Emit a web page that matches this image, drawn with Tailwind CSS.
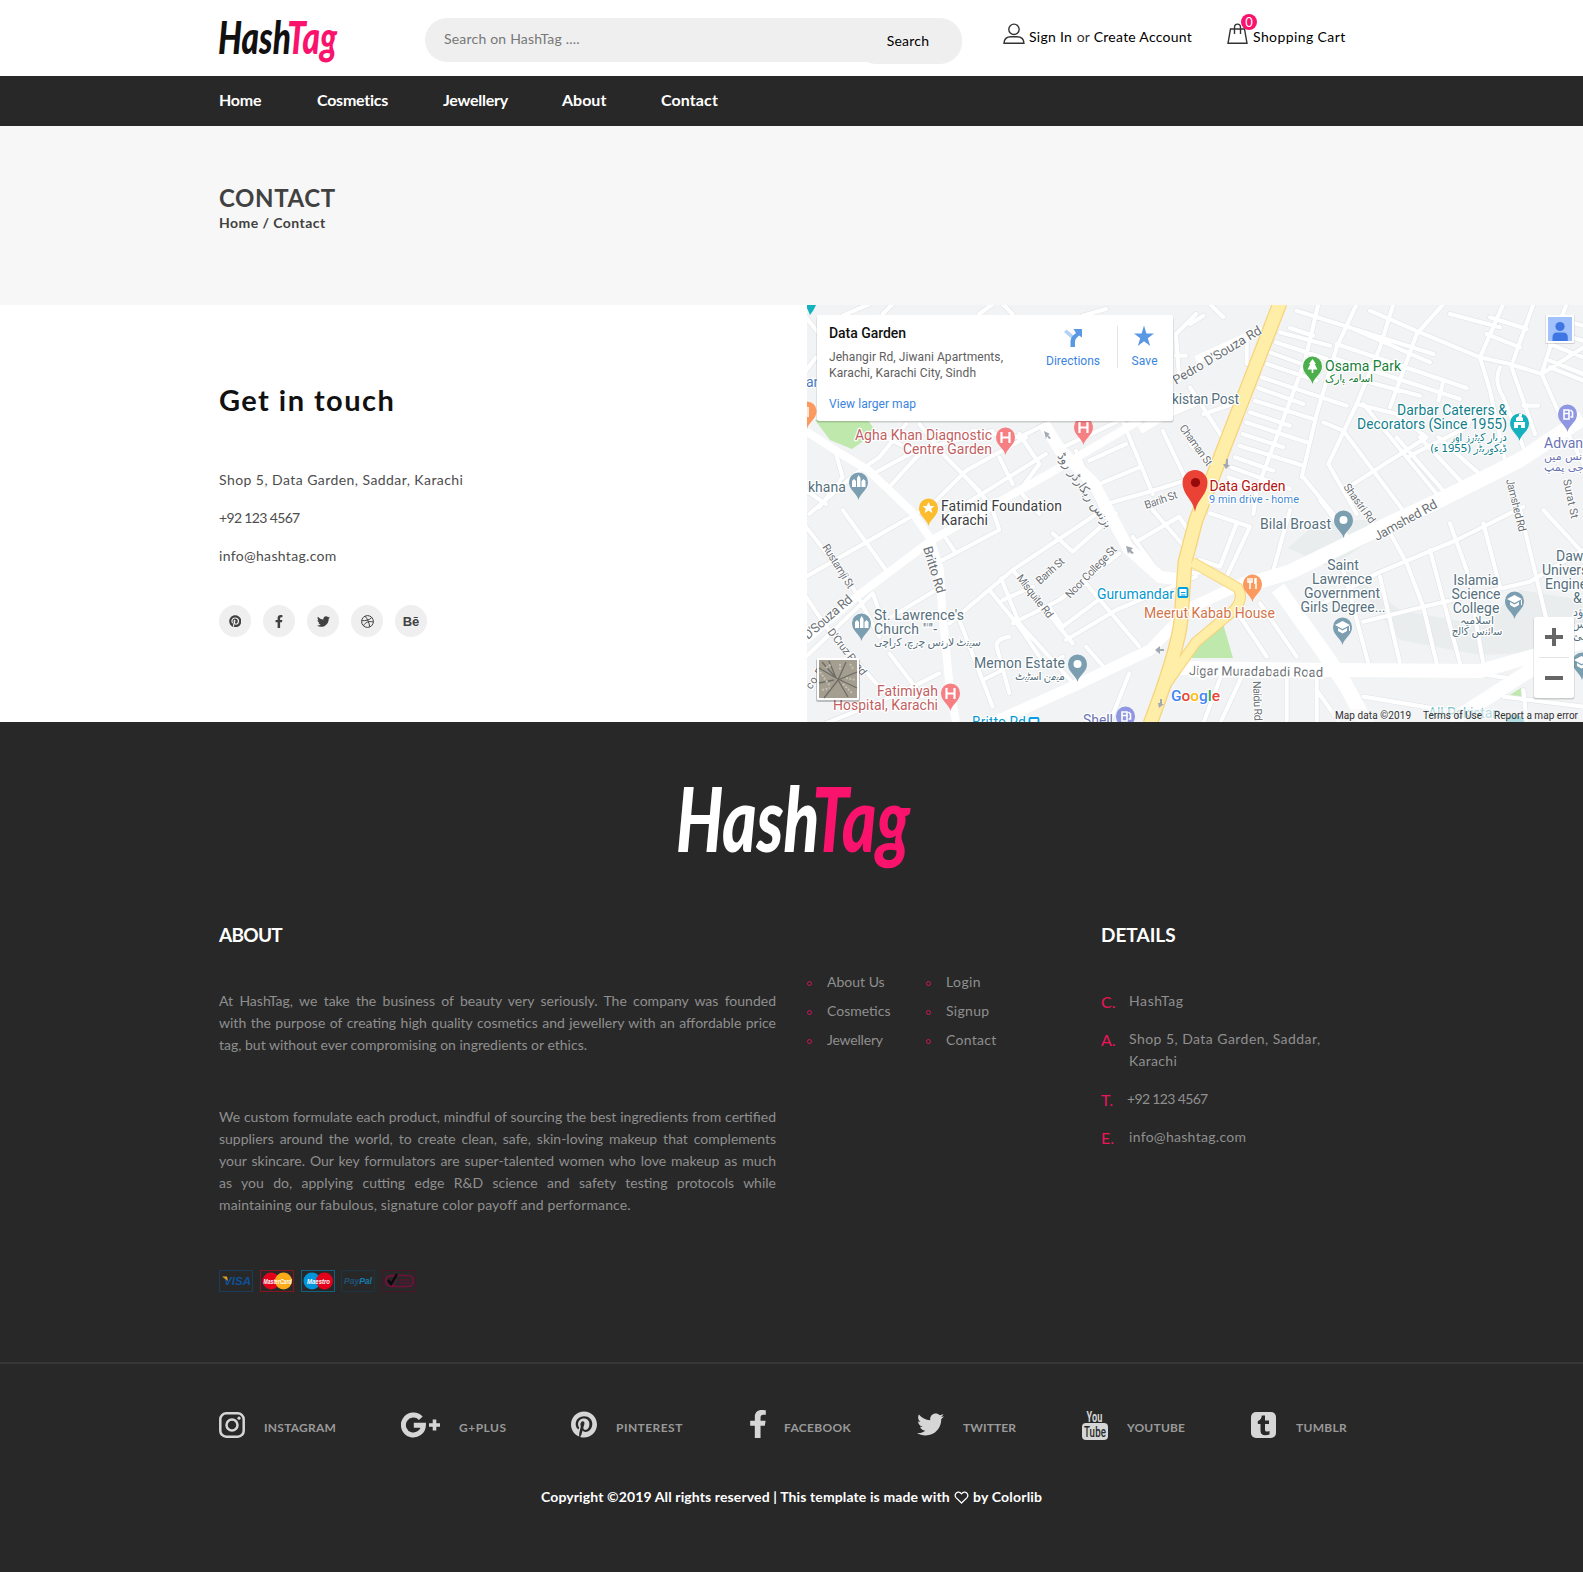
<!DOCTYPE html>
<html lang="en">
<head>
<meta charset="utf-8">
<title>HashTag | Contact</title>
<script src="https://cdn.jsdelivr.net/npm/@tailwindcss/browser@4"></script>
</head>
<body class="bg-white font-['Lato',sans-serif] text-[14px] leading-[22px] text-black w-[1583px] overflow-x-hidden">

<header>
  <div class="flex items-start h-[76px] pl-[217px]">
    <svg class="w-[122px] h-[46px] mt-[20px] shrink-0 overflow-visible" viewBox="0 0 122 46" font-family="Lato" font-weight="900" font-style="italic" font-size="45">
      <text x="1" y="34" textLength="119" lengthAdjust="spacingAndGlyphs" fill="#111">Hash<tspan fill="#f9136c">Tag</tspan></text>
    </svg>
    <div class="flex items-start justify-between w-[537px] h-[44px] mt-[18px] ml-[86px] pl-[19px] rounded-full bg-[#efefef] shrink-0">
      <span class="mt-[10px] text-[#777] tracking-[0.2px]">Search on HashTag ....</span>
      <button class="mt-[2px] pb-[2px] w-[108px] h-[44px] rounded-full bg-[#efefef] tracking-[0.25px]">Search</button>
    </div>
    <a class="flex items-start ml-[41px] w-[189px] shrink-0 whitespace-nowrap">
      <svg class="w-[22px] h-[22px] mt-[23px]" viewBox="0 0 22 22" fill="none" stroke="#333" stroke-width="1.4"><circle cx="11" cy="6.3" r="5.2"/><path d="M1 20.3C1.2 15.5 4.500 13.800 8 13.800H14C17.500 13.800 20.800 15.500 21 20.300Z"/></svg>
      <span class="mt-[26px] ml-[4px] w-[48px] tracking-[0.3px]">Sign In</span><span class="mt-[26px] w-[17px] text-[#333]">or</span><span class="mt-[26px] tracking-[0.25px]">Create Account</span>
    </a>
    <a class="flex items-start ml-[35px] relative whitespace-nowrap">
      <svg class="w-[21px] h-[22px] mt-[23px]" viewBox="0 0 21 22" fill="none" stroke="#333" stroke-width="1.4"><path d="M3.500 6H17.500L20 20.300H1Z M7.500 11V4.500C7.500 0 13.500 0 13.500 4.500V11"/></svg>
      <span class="absolute left-[14px] top-[14px] size-[16px] rounded-full bg-[#f9136c] text-white text-[13px] leading-[16px] text-center">0</span>
      <span class="mt-[26px] ml-[5px] tracking-[0.4px]">Shopping Cart</span>
    </a>
  </div>
  <nav class="flex items-center h-[50px] bg-[#282828] pl-[219px] pb-[2px] text-white text-[16px] font-bold whitespace-nowrap tracking-[-0.25px]">
    <a class="w-[98px]">Home</a><a class="w-[126px]">Cosmetics</a><a class="w-[119px]">Jewellery</a><a class="w-[99px] tracking-normal">About</a><a class="tracking-[0.1px]">Contact</a>
  </nav>
</header>

<section class="h-[179px] bg-[#f7f7f7] pl-[219px] pt-[60px] text-[#414141] font-bold">
  <h1 class="text-[24px] leading-[24px] tracking-[0.6px]">CONTACT</h1>
  <p class="mt-[1px] tracking-[0.45px] pt-[1px]">Home / Contact</p>
</section>

<main class="flex h-[417px]">
  <div class="w-[807px] pl-[219px] pt-[75px] shrink-0">
    <h2 class="text-[29px] leading-[40px] font-bold text-[#111] tracking-[1.45px]">Get in touch</h2>
    <div class="mt-[49px] flex flex-col gap-[16px] text-[#4d4d4d]">
      <p class="tracking-[0.44px]">Shop 5, Data Garden, Saddar, Karachi</p>
      <p class="tracking-[-0.65px]">+92 123 4567</p>
      <p class="tracking-[0.32px]">info@hashtag.com</p>
    </div>
    <div class="flex gap-[12px] mt-[38px] text-[#414141]">
      <a class="size-[32px] rounded-full bg-[#efefef] flex items-center justify-center"><svg class="size-[12.500px]" viewBox="0 0 496 512" fill="currentColor"><path id="pin" d="M496 256c0 137-111 248-248 248-25.6 0-50.2-3.9-73.4-11.1 10.1-16.5 25.2-43.5 30.8-65 3-11.600 15.4-59 15.4-59 8.1 15.4 31.7 28.5 56.8 28.5 74.800 0 128.700-68.800 128.700-154.300 0-81.900-66.900-143.200-152.900-143.200-107 0-163.900 71.800-163.900 150.100 0 36.400 19.400 81.700 50.300 96.100 4.700 2.200 7.200 1.200 8.300-3.300.8-3.400 5-20.300 6.900-28.100.6-2.500.3-4.700-1.700-7.100-10.100-12.500-18.300-35.300-18.300-56.600 0-54.700 41.400-107.600 112-107.600 60.900 0 103.600 41.500 103.600 100.900 0 67.100-33.900 113.600-78 113.600-24.300 0-42.600-20.100-36.700-44.800 7-29.500 20.500-61.300 20.500-82.600 0-19-10.200-34.900-31.400-34.900-24.900 0-44.900 25.700-44.900 60.200 0 22 7.400 36.800 7.400 36.800s-24.500 103.800-29 123.200c-5 21.400-3 51.600-.9 71.200C65.400 450.900 0 361.100 0 256 0 119 111 8 248 8s248 111 248 248z"/></svg></a>
      <a class="size-[32px] rounded-full bg-[#efefef] flex items-center justify-center"><svg class="h-[13px] w-[8px]" viewBox="0 0 320 512" fill="currentColor"><path id="fb" d="M279.140 288l14.220-92.660h-88.910v-60.130c0-25.350 12.420-50.060 52.240-50.060h40.420V6.260S260.430 0 225.360 0c-73.220 0-121.080 44.380-121.080 124.720v70.620H22.890V288h81.390v224h100.170V288z"/></svg></a>
      <a class="size-[32px] rounded-full bg-[#efefef] flex items-center justify-center"><svg class="size-[13px]" viewBox="0 0 512 512" fill="currentColor"><path id="tw" d="M459.370 151.716c.325 4.548.325 9.097.325 13.645 0 138.720-105.583 298.558-298.558 298.558-59.452 0-114.680-17.219-161.137-47.106 8.447.974 16.568 1.299 25.340 1.299 49.055 0 94.213-16.568 130.274-44.832-46.132-.975-84.792-31.188-98.112-72.772 6.498.974 12.995 1.624 19.818 1.624 9.421 0 18.843-1.300 27.614-3.573-48.081-9.747-84.143-51.980-84.143-102.985v-1.299c13.969 7.797 30.214 12.670 47.431 13.319-28.264-18.843-46.781-51.005-46.781-87.391 0-19.492 5.197-37.360 14.294-52.954 51.655 63.675 129.300 105.258 216.365 109.807-1.624-7.797-2.599-15.918-2.599-24.040 0-57.828 46.782-104.934 104.934-104.934 30.213 0 57.502 12.670 76.670 33.137 23.715-4.548 46.456-13.320 66.599-25.340-7.798 24.366-24.366 44.833-46.132 57.827 21.117-2.273 41.584-8.122 60.426-16.243-14.292 20.791-32.161 39.308-52.628 54.253z"/></svg></a>
      <a class="size-[32px] rounded-full bg-[#efefef] flex items-center justify-center"><svg class="size-[13px]" viewBox="0 0 26 26" fill="none" stroke="currentColor" stroke-width="2"><circle cx="13" cy="13" r="11.800"/><path d="M8.500 2.500C13 8 16 15 17.500 23.500M1.500 11.500C9 11.500 17 10.500 21.500 5M5 21.500C8.500 14.500 16 11.500 24.700 14"/></svg></a>
      <a class="size-[32px] rounded-full bg-[#efefef] flex items-center justify-center font-['Liberation_Sans'] font-bold text-[13px] leading-none">Bē</a>
    </div>
  </div>

  <svg class="w-[776px] h-[417px] shrink-0" viewBox="807 305 776 417" font-family="Roboto">
    <defs>
      <g id="streets" fill="none" stroke-linejoin="round">
        <!-- north-west -->
        <g transform="translate(806 304) scale(.33333)">
          <path d="M0 40L40 90M0 200L30 160M110 35L190 0M230 30L260 0M520 30L560 0M590 0L620 30M830 35L900 15M1170 30L1110 90L1120 230M1110 155H1140M1100 330L1170 300M1070 380L1170 590M950 350L1040 570M810 440L890 620M640 390L700 480M580 460L620 540M480 520L560 610M500 380L640 400L720 360M300 360L220 460L160 500L10 630M200 510L330 440L560 380M350 630L480 500L660 400M430 630L720 450M240 560L340 450M90 450L110 520L40 610M0 560L60 600M850 470L960 420M880 540L1000 490M900 600L1040 560L1170 520M770 430L940 350M640 560L700 630M340 360L420 460L520 560M240 400L340 450M700 480L640 560"/>
        </g>
        <!-- north-east -->
        <g transform="translate(1190 304) scale(.33333)">
          <path d="M385 0L345 170L200 560L190 630M500 0L440 130L380 330L335 520M610 0L570 130L500 300L415 480M760 0L680 90L600 310M940 0L870 160M1030 0L970 170M270 85L420 125M258 115L410 165M240 145L390 200M232 180L380 230M215 220L470 305M205 252L340 300M195 290L370 345M180 325L300 365M168 355L350 415M158 390L280 430M148 425L340 485M135 460L250 500M125 490L300 555M115 520L230 560M300 72L370 95M320 20L730 150M480 70L720 175M440 120L830 252M440 165L810 285M520 230L690 275M540 20L690 85L870 160L960 180L1055 210L1180 130M400 355L460 380M460 380L640 620M520 300L740 570M340 520L430 630M415 480L500 630M500 300L620 330L710 400L490 540M650 460L830 370L850 320M620 400L760 560M690 400L820 540M745 400L880 520M930 190Q910 230 940 280L1000 430M965 190L1035 390M1000 305H1045M1055 210L1130 380L1180 480M1055 210L1080 130L1130 0M1090 40L1180 65M1080 80L1180 110M1080 120L1180 160M1080 170L1180 210M1080 190L1180 230M760 230L745 290M870 160L900 260L945 470M900 40L1010 75M780 30L930 70M890 90L990 130M0 60L40 35M60 0L100 40M170 110V180M40 330L130 300M0 250L110 420M0 420L80 500"/>
        </g>
        <!-- south-west -->
        <g transform="translate(806 510) scale(.33333)">
          <path d="M0 200L350 0M0 50L140 230L220 380M110 0L240 180M0 260L60 350L210 520M0 440L200 250L215 290M240 330L390 240M390 160L580 60L560 0M410 70L450 130M430 340L620 180L890 0M620 180L800 400M585 205L640 340L810 530M550 240L640 350L720 470M590 270L680 230M620 340L760 270L940 130M460 330L560 590M610 380Q560 390 575 420L610 550M530 510L590 480M430 20L500 0M740 70L800 125L930 10M730 290L770 350L890 260M840 220L1000 410M780 390L930 300L1170 200M250 430L350 560M400 490L280 550L60 640M720 470L770 440M840 410L910 490M970 490L910 640M1000 90L1120 20L1170 100M1040 0L1170 150M980 80L1060 190"/>
        </g>
        <!-- south-east -->
        <g transform="translate(1190 510) scale(.33333)">
          <path d="M60 10L180 50L110 200M140 40L90 170L30 150M300 0L250 180M0 190L60 185M400 280L560 190L800 90L1000 -10M520 335L700 290L1020 215L1180 120M590 50L650 160L700 290L740 460M780 40L830 180L880 460M720 120L810 460M570 200L630 460M460 180L535 460M880 40L930 230M990 0L1070 330M150 320L230 440M210 280L320 440M160 490L90 640M290 500V640M380 500V640M380 540L450 640M520 560L820 610M100 480L40 640M860 490L960 505M1000 540L1010 640M1060 0L1180 130M390 -30L480 90M940 560L1180 590"/>
        </g>
      </g>
      <g id="avenues" fill="none" stroke-linejoin="round">
        <path stroke-width="8" d="M806 431L838 452L868 470L912 512L930 538L940 570L942 610L950 690L956 722M806 640L856 597L932 540L1052 472L1140 420M1190 400L1140 430M1196 360L1262 330"/>
        <path stroke-width="12" d="M1044 424L1060 450L1094 484L1128 548L1160 577L1184 580"/>
        <path stroke-width="11" d="M990 724L1072 687L1150 650L1190 608L1250 580"/>
        <path stroke-width="15" d="M1250 584L1290 572L1380 528L1440 500L1520 460L1583 418"/>
        <path stroke-width="15" d="M1278 588L1322 650L1345 684L1370 730"/>
        <path stroke-width="14" d="M1178 668L1340 670L1480 671L1583 642M1450 722L1540 664L1583 630"/>
      </g>
    </defs>
    <rect x="807" y="305" width="776" height="417" fill="#f1f3f4"/>
    <path d="M1288 548L1320 520L1400 520L1330 568ZM1345 570L1400 640L1480 655L1583 650V600L1520 590L1480 625L1400 610Z" fill="#e9edee"/>
    <path d="M815 420H868L876 432L852 449L830 440Z M1185 652L1222 620L1233 658H1185Z M1505 698L1521 688V700Z" fill="#bfe8ac"/>
    <g stroke="#e1e4e7" stroke-width="16" stroke-linecap="round"><use href="#streets"/></g>
    <g stroke="#fff" stroke-width="12.500" stroke-linecap="round"><use href="#streets"/></g>
    <g stroke="#fff"><use href="#avenues"/></g>
    <g fill="none" stroke-linejoin="round">
      <g stroke="#f7d37a" stroke-width="15"><path d="M1280 303L1210 484L1196 520L1185 562L1181 620Q1178 650 1150 724"/><path stroke-width="11" d="M1192 562L1238 588Q1245 600 1232 612L1196 642L1162 690L1150 724"/></g>
      <g stroke="#ffeea8" stroke-width="12.500"><path d="M1280 303L1210 484L1196 520L1185 562L1181 620Q1178 650 1150 724"/><path stroke-width="9" d="M1192 562L1238 588Q1245 600 1232 612L1196 642L1162 690L1150 724"/></g>
    </g>

    <!-- street names -->
    <g fill="#6b7075" font-size="11" stroke="#fff" stroke-width="2" paint-order="stroke" stroke-linejoin="round">
      <text transform="translate(1176 385) rotate(-31)" font-size="13" textLength="101">Pedro D'Souza Rd</text>
      <text transform="translate(1179 428) rotate(54)" textLength="48">Chaman St</text>
      <text transform="translate(1146 509) rotate(-19)" textLength="34">Barih St</text>
      <text transform="translate(1057 456) rotate(56)" font-size="12.500" font-family="DejaVu Sans" textLength="88">بزنس ریکارڈر روڈ</text>
      <text transform="translate(923 548) rotate(73)" font-size="13" textLength="48">Britto Rd</text>
      <text transform="translate(822 547) rotate(58)" textLength="50">Rustamji St</text>
      <text transform="translate(808 640) rotate(-41)" font-size="13" textLength="60">D'Souza Rd</text>
      <text transform="translate(827 632) rotate(52)" textLength="56">D'Cruz Road</text>
      <text transform="translate(1040 585) rotate(-42)" textLength="34">Barih St</text>
      <text transform="translate(1070 599) rotate(-46)" textLength="68">Noor College St</text>
      <text transform="translate(1016 578) rotate(52)" textLength="52">Misquite Rd</text>
      <text transform="translate(1343 487) rotate(54)" textLength="46">Shastri Rd</text>
      <text transform="translate(1377 541) rotate(-29)" font-size="13" textLength="70">Jamshed Rd</text>
      <text transform="translate(1506 480) rotate(76)" textLength="54">Jamshed Rd</text>
      <text transform="translate(1563 480) rotate(78)" textLength="40">Surat St</text>
      <text transform="translate(1253 681) rotate(88)" textLength="40">Naidu Rd</text>
      <text x="1189" y="675" font-size="13" transform="rotate(.8 1189 676)" stroke-width="4" textLength="134">Jigar Muradabadi Road</text>
      <text transform="translate(811 690) rotate(-55)" textLength="30">co Rd</text>
    </g>

    <!-- places -->
    <g font-size="14" stroke="#fff" stroke-width="2.500" paint-order="stroke" stroke-linejoin="round">
      <g fill="#c2605f">
        <text x="855" y="440" textLength="137">Agha Khan Diagnostic</text><text x="903" y="454" textLength="89">Centre Garden</text>
        <text x="877" y="696" textLength="61">Fatimiyah</text><text x="833" y="710" textLength="105">Hospital, Karachi</text>
      </g>
      <g fill="#3c4043"><text x="941" y="511" textLength="121">Fatimid Foundation</text><text x="941" y="525" textLength="47">Karachi</text></g>
      <g fill="#56707e">
        <text x="808" y="492">khana</text>
        <text x="1172" y="404" textLength="67">kistan Post</text>
        <text x="874" y="620" textLength="90">St. Lawrence's</text><text x="874" y="634" textLength="63">Church "'"-</text>
        <text x="874" y="646" font-size="11" font-family="DejaVu Sans" textLength="107">سینٹ لارنس چرچ، کراچی</text>
        <text x="974" y="668" textLength="91">Memon Estate</text>
        <text x="1015" y="680" font-size="11" font-family="DejaVu Sans" textLength="50">میمن اسٹیٹ</text>
        <text x="1260" y="529" textLength="71">Bilal Broast</text>
        <g text-anchor="middle">
          <text x="1343" y="570">Saint</text><text x="1342" y="584">Lawrence</text><text x="1342" y="598">Government</text><text x="1343" y="612" textLength="85">Girls Degree...</text>
          <text x="1476" y="585">Islamia</text><text x="1476" y="599">Science</text><text x="1476" y="613">College</text>
          <text x="1477" y="624" font-size="11" font-family="DejaVu Sans">اسلامیہ</text><text x="1477" y="635" font-size="11" font-family="DejaVu Sans" textLength="51">سائنس کالج</text>
        </g>
        <text x="1556" y="561">Dawood</text><text x="1542" y="575">University</text><text x="1545" y="589">Engineering</text><text x="1573" y="603">&amp;...</text>
        <text x="1573" y="616" font-size="11" font-family="DejaVu Sans">ؤد</text><text x="1572" y="628" font-size="11" font-family="DejaVu Sans">رس</text><text x="1573" y="640" font-size="11" font-family="DejaVu Sans">جینئ</text>
      </g>
      <text x="1325" y="371" fill="#188038" textLength="76">Osama Park</text>
      <text x="1325" y="382" fill="#188038" font-size="11" font-family="DejaVu Sans" textLength="48">اسامہ پارک</text>
      <g fill="#137f8c"><text x="1397" y="415" textLength="110">Darbar Caterers &amp;</text><text x="1357" y="429" textLength="150">Decorators (Since 1955)</text>
        <text x="1450" y="441" font-size="11" font-family="DejaVu Sans" textLength="57">دربار کیٹرز اور</text><text x="1430" y="452" font-size="11" font-family="DejaVu Sans" textLength="77">ڈیکوریٹر (1955 ء)</text></g>
      <g fill="#6a74b4"><text x="1544" y="448">Advance</text><text x="1544" y="460" font-size="11" font-family="DejaVu Sans">وانس میں</text><text x="1544" y="471" font-size="11" font-family="DejaVu Sans">ن جی پمپ</text><text x="1083" y="725" textLength="30">Shell</text></g>
      <text x="1209.500" y="491" fill="#b31412" textLength="76">Data Garden</text>
      <text x="1209" y="503" font-size="11" fill="#4285d6" textLength="90">9 min drive - home</text>
      <g fill="#0898d0"><text x="1097" y="599" textLength="77">Gurumandar</text><text x="972" y="727" textLength="54">Britto Rd</text></g>
      <text x="1144" y="618" fill="#d2744a" textLength="131">Meerut Kabab House</text>
      <text x="1428" y="718" fill="#7cc3cb" textLength="72">All Pakistan</text>
      <text x="806" y="387" fill="#4a7bbd">an</text>
    </g>
    <g fill="#fff" stroke="#039fe5" stroke-width="1.800"><rect x="1178.500" y="588" width="9" height="9" rx="1"/><rect x="1029.500" y="718" width="9" height="9" rx="1"/><path d="M1181 592.500H1185.500M1181 595H1185.500" stroke-width="1"/></g>

    <!-- pins -->
    <defs><path id="drop" d="M0 18C-1.500 11-9.500 8.500-9.500 0A9.500 9.500 0 0 1 9.500 0C9.500 8.500 1.500 11 0 18Z"/></defs>
    <g fill="#f67f83"><use href="#drop" x="1005.500" y="437"/><use href="#drop" x="1083.500" y="427"/><use href="#drop" x="950.500" y="693"/></g>
    <g fill="none" stroke="#fff" stroke-width="2.200"><path d="M1001.500 432V443M1009.500 432V443M1001.500 437.500H1009.500M1079.500 422V433M1087.500 422V433M1079.500 427.500H1087.500M946.500 688V699M954.500 688V699M946.500 693.500H954.500"/></g>
    <g fill="#7b9eb0"><use href="#drop" x="858.500" y="482"/><use href="#drop" x="861.500" y="623"/><use href="#drop" x="1077.500" y="664"/><use href="#drop" x="1343.500" y="520"/><use href="#drop" x="1342.500" y="627"/><use href="#drop" x="1514.500" y="601"/><use href="#drop" x="1582" y="662"/></g>
    <g fill="#fff"><circle cx="1077.500" cy="664" r="4"/><circle cx="1343.500" cy="520" r="4"/>
      <path id="arch" d="M852 487V481L854 479L856 481V487ZM857 487V478L858.700 475L860.500 478V487ZM861.500 487V481L863.500 479L865.500 481V487Z"/><use href="#arch" x="3" y="141"/>
      <path id="cap" d="M1342.500 621L1350 625L1342.500 629L1335 625ZM1338 628V631L1342.500 633.500L1347 631V628L1342.500 630.500ZM1349 626H1350V631H1349Z"/><use href="#cap" x="172" y="-26"/><use href="#cap" x="239" y="35"/></g>
    <use href="#drop" x="928.500" y="508" fill="#fbbc2d"/><path d="M928.500 502L930.300 506H934.500L931.200 508.700L932.400 513L928.500 510.500L924.600 513L925.800 508.700L922.500 506H926.700Z" fill="#fff"/>
    <use href="#drop" x="1312.500" y="366" fill="#4bb04b"/><path d="M1312.500 359L1316 364H1314.700L1317.500 369.500H1313.300V373H1311.700V369.500H1307.500L1310.300 364H1309Z" fill="#fff"/>
    <use href="#drop" x="1519.500" y="423" fill="#16b1be"/><path d="M1514 428V422H1525V428H1521V425H1518V428ZM1516 421V418L1519 416V414H1522V416.500H1520V416L1523 418V421Z" fill="#fff"/>
    <g fill="#8f97e2"><use href="#drop" x="1567.500" y="414"/><use href="#drop" x="1125.500" y="716"/></g>
    <g fill="none" stroke="#fff" stroke-width="1.600"><path id="pump" d="M1564 419V410H1569V419ZM1564 413.500H1569M1570.500 410L1572.500 412V417H1570.500"/><use href="#pump" x="-442" y="302"/></g>
    <g fill="#fb9a5e"><use href="#drop" x="1252.500" y="584"/><use href="#drop" x="807" y="411"/></g>
    <path d="M1250 578V589M1248 578V582H1252V578M1256 578V589M1255 578V584M808 407V417" fill="none" stroke="#fff" stroke-width="1.500"/>
    <path d="M807 305H816Q814 310 810 315L807 308Z" fill="#16b1be"/>
    <use href="#drop" x="1515" y="724" fill="#6fc5cc"/>
    <path d="M1195 512C1193 499 1182.500 495 1182.500 482.500A12.500 12.500 0 0 1 1207.500 482.500C1207.500 495 1197 499 1195 512Z" fill="#ea4335"/><circle cx="1195.500" cy="482.500" r="4.600" fill="#960a0a"/>
    <!-- one-way arrows -->
    <g fill="#a3a9b2"><path d="M1044 431L1050 434L1048 435L1051 438L1049 439L1047 436L1046 439ZM1228 459V465H1230L1226 469L1223 464H1226V459ZM1126 546L1133 548L1131 550L1134 553L1132 554L1129 552L1128 554ZM1155 650L1160 646V649H1164V651H1160V654ZM1162 699V704H1164L1159 708L1158 703H1160V699Z"/></g>

    <text x="1171" y="701" font-size="15.500" font-weight="500" stroke="#fff" stroke-width="2" paint-order="stroke" textLength="49"><tspan fill="#4285f4">G</tspan><tspan fill="#ea4335">o</tspan><tspan fill="#fbbc05">o</tspan><tspan fill="#4285f4">g</tspan><tspan fill="#34a853">l</tspan><tspan fill="#ea4335">e</tspan></text>

    <!-- attribution -->
    <rect x="1331" y="709" width="252" height="13" fill="#f5f5f5" fill-opacity=".5"/>
    <g font-size="10" fill="#333"><text x="1335" y="719" textLength="76">Map data ©2019</text><text x="1423" y="719" textLength="59">Terms of Use</text><text x="1494" y="719" textLength="84">Report a map error</text></g>

    <!-- place card -->
    <rect x="816.500" y="316.500" width="357" height="106" rx="2" fill="#000" fill-opacity=".16"/>
    <rect x="817" y="315" width="356" height="106" rx="2" fill="#fff"/>
    <text x="829" y="338" font-size="14" font-weight="500" fill="#111" textLength="77">Data Garden</text>
    <g font-size="12" fill="#5e5e5e"><text x="829" y="361" textLength="174">Jehangir Rd, Jiwani Apartments,</text><text x="829" y="377" textLength="147">Karachi, Karachi City, Sindh</text></g>
    <g font-size="12" fill="#3a84df"><text x="829" y="408" textLength="87">View larger map</text><text x="1046" y="365" textLength="54">Directions</text><text x="1131.500" y="365" textLength="26">Save</text></g>
    <path d="M1117.500 326V368" stroke="#e4e4e4"/>
    <path d="M1073 347V340L1064 332L1066.500 329.500L1073 335" fill="#b3d1f7"/>
    <path d="M1070.500 347V341Q1070.500 338 1073 335.500L1076 333L1073.500 329H1082V337.500L1079 335.500L1076 338.500Q1075 340 1075 342V347Z" fill="#5b98e4"/>
    <path d="M1144 325.500L1146.400 333.500H1154L1147.800 338.300L1150.200 346L1144 341.300L1137.800 346L1140.200 338.300L1134 333.500H1141.600Z" fill="#5b98e4"/>

    <!-- account -->
    <rect x="1545.500" y="315" width="29" height="29" fill="#000" fill-opacity=".14"/><rect x="1546" y="315" width="28" height="28" fill="#fff"/><rect x="1548" y="317" width="24" height="24" fill="#a1c2fa"/>
    <circle cx="1560" cy="326.500" r="4.600" fill="#3f76e4"/><path d="M1552.500 341V337.500Q1552.500 332.500 1557 332.500H1563Q1567.800 332.500 1567.800 337.500V341Z" fill="#3f76e4"/>

    <!-- zoom controls -->
    <rect x="1533.500" y="617.500" width="41" height="82" rx="2" fill="#000" fill-opacity=".16"/><rect x="1534" y="617" width="40" height="81" rx="2" fill="#fff"/>
    <path d="M1539 657.500H1569" stroke="#e4e4e4"/><path d="M1545 637H1563M1554 628V646M1545 678H1563" stroke="#666" stroke-width="4"/>

    <!-- satellite toggle -->
    <rect x="816" y="659" width="44" height="43" rx="2" fill="#000" fill-opacity=".22"/><rect x="817" y="658" width="42" height="42" rx="1" fill="#fff"/><rect x="819" y="660" width="38" height="38" fill="#a39e90"/>
    <path d="M819 668L836 678L857 688M838 680L846 662M838 680L824 698M822 662L836 678M838 680L857 672M829 661L836 678M819 683L834 680M838 680L848 697" stroke="#6f6c66" stroke-width="1.300" fill="none"/>
    <path d="M820 672L830 686M826 668L832 664M843 684L853 694M846 678L856 680M850 664L854 670M822 690L830 688M840 664V670" stroke="#c6c0b0" stroke-width="2" fill="none" stroke-dasharray="2 1.500"/>
  </svg>
</main>

<footer class="bg-[#282828] h-[850px] text-[#8f8f8f]">
  <div class="pl-[677px] pt-[61px]">
    <svg class="w-[236px] h-[94px] overflow-visible" viewBox="0 0 236 94" font-family="Lato" font-weight="900" font-style="italic" font-size="89">
      <text x="-1" y="69" textLength="234" lengthAdjust="spacingAndGlyphs" fill="#fff">Hash<tspan fill="#f9136c">Tag</tspan></text>
    </svg>
  </div>
  <div class="flex items-start pl-[219px] pt-[47px] h-[485px] whitespace-nowrap">
    <div class="w-[588px] shrink-0">
      <h3 class="text-[19px] leading-[22px] font-bold text-white tracking-[-0.7px]">ABOUT</h3>
      <div class="mt-[44px] w-[557px]">
        <span class="block [text-align-last:justify]">At HashTag, we take the business of beauty very seriously. The company was founded</span>
        <span class="block [text-align-last:justify]">with the purpose of creating high quality cosmetics and jewellery with an affordable price</span>
        <span class="block">tag, but without ever compromising on ingredients or ethics.</span>
      </div>
      <div class="mt-[50px] w-[557px]">
        <span class="block [text-align-last:justify]">We custom formulate each product, mindful of sourcing the best ingredients from certified</span>
        <span class="block [text-align-last:justify]">suppliers around the world, to create clean, safe, skin-loving makeup that complements</span>
        <span class="block [text-align-last:justify]">your skincare. Our key formulators are super-talented women who love makeup as much</span>
        <span class="block [text-align-last:justify]">as you do, applying cutting edge R&amp;D science and safety testing protocols while</span>
        <span class="block tracking-[0.14px]">maintaining our fabulous, signature color payoff and performance.</span>
      </div>
      <svg class="mt-[53px] w-[198px] h-[24px]" viewBox="0 0 198 24" font-family="Liberation Sans" font-weight="700" font-style="italic">
        <g fill="none"><rect x=".5" y="1.500" width="33" height="21" stroke="#1d3b5a"/><rect x="41.500" y="1.500" width="33" height="21" stroke="#85161f"/><rect x="82.500" y="1.500" width="33" height="21" stroke="#12607f"/><rect x="122.500" y="1.500" width="33" height="21" stroke="#1d3442"/><rect x="163.500" y="1.500" width="33" height="21" stroke="#471528"/></g>
        <text x="5" y="16" font-size="11.500" fill="#0e5198" textLength="27" lengthAdjust="spacingAndGlyphs">VISA</text><path d="M3 7.500H8L9 12Z" fill="#e0a021"/>
        <circle cx="52" cy="12" r="8.500" fill="#e3001b"/><circle cx="64.500" cy="12" r="8.500" fill="#fbab18"/><text x="44.500" y="14.500" font-size="6.500" fill="#fff" textLength="28" lengthAdjust="spacingAndGlyphs">MasterCard</text>
        <circle cx="93" cy="12" r="8.500" fill="#0095db"/><circle cx="105.500" cy="12" r="8.500" fill="#e3001b"/><text x="88" y="14.500" font-size="7" fill="#fff" textLength="23" lengthAdjust="spacingAndGlyphs">Maestro</text>
        <text x="125" y="15" font-size="8.500" fill="#1f5379" textLength="28" lengthAdjust="spacingAndGlyphs">Pay<tspan fill="#157db0">Pal</tspan></text>
        <rect x="166.500" y="6.500" width="28" height="11" rx="5.500" fill="none" stroke="#75103a" stroke-width="1.500"/><circle cx="172" cy="12" r="5" fill="none" stroke="#75103a"/><path d="M169 11L172 15L178 5" fill="none" stroke="#080808" stroke-width="2.200"/><path d="M180 11H191M180 14H191" stroke="#5a162f" stroke-width="1.500"/>
      </svg>
    </div>
    <div class="flex w-[294px] shrink-0 pt-[47px]">
      <ul class="w-[119px] flex flex-col gap-[7px]">
        <li class="flex items-center"><i class="size-[5px] mt-[2px] rounded-full border border-[#d0145c] mr-[15px]"></i>About Us</li>
        <li class="flex items-center"><i class="size-[5px] mt-[2px] rounded-full border border-[#d0145c] mr-[15px]"></i>Cosmetics</li>
        <li class="flex items-center tracking-[-0.2px]"><i class="size-[5px] mt-[2px] rounded-full border border-[#d0145c] mr-[15px]"></i>Jewellery</li>
      </ul>
      <ul class="flex flex-col gap-[7px]">
        <li class="flex items-center tracking-[0.4px]"><i class="size-[5px] mt-[2px] rounded-full border border-[#d0145c] mr-[15px]"></i>Login</li>
        <li class="flex items-center tracking-[0.3px]"><i class="size-[5px] mt-[2px] rounded-full border border-[#d0145c] mr-[15px]"></i>Signup</li>
        <li class="flex items-center tracking-[0.3px]"><i class="size-[5px] mt-[2px] rounded-full border border-[#d0145c] mr-[15px]"></i>Contact</li>
      </ul>
    </div>
    <div>
      <h3 class="text-[19px] leading-[22px] font-bold text-white">DETAILS</h3>
      <dl class="mt-[44px] grid grid-cols-[28px_auto] gap-y-[16px]">
        <dt class="text-[#ed145b] text-[16px] h-[22px] pt-[1px]">C.</dt><dd class="tracking-[0.6px]">HashTag</dd>
        <dt class="text-[#ed145b] text-[16px] h-[22px] pt-[1px]">A.</dt><dd class="tracking-[0.45px]">Shop 5, Data Garden, Saddar,<br><span class="tracking-[0.3px]">Karachi</span></dd>
        <dt class="text-[#ed145b] text-[16px] h-[22px] pt-[1px]">T.</dt><dd class="tracking-[-0.65px] -ml-[2px]">+92 123 4567</dd>
        <dt class="text-[#ed145b] text-[16px] h-[22px] pt-[1px]">E.</dt><dd class="tracking-[0.3px]">info@hashtag.com</dd>
      </dl>
    </div>
  </div>
  <div class="border-t-2 border-[#363636] pt-[46px]">
    <div class="flex items-start pl-[219px] text-[12px] font-bold whitespace-nowrap text-[#999]">
      <a class="flex w-[182px] tracking-[0.25px]"><svg class="w-[26px] h-[26px] mt-[2px] mr-[19px]" viewBox="0 0 26 26" fill="none" stroke="#d6d6d6" stroke-width="2.500"><rect x="1.300" y="1.300" width="23.400" height="23.400" rx="6"/><circle cx="13" cy="13" r="5.500"/><circle cx="20" cy="6.200" r="1.600" fill="#d6d6d6" stroke="none"/></svg><span class="mt-[7px]">INSTAGRAM</span></a>
      <a class="flex w-[170px] tracking-[0.5px]"><svg class="w-[39px] h-[26px] mt-[2px] mr-[19px]" viewBox="0 0 39 26" fill="none" stroke="#d6d6d6" stroke-width="5"><path d="M19.800 6.300A10 10 0 1 0 22.400 13.200H12.800"/><path d="M28 13H39M33.500 7.500V18.500" stroke-width="3.600"/></svg><span class="mt-[7px]">G+PLUS</span></a>
      <a class="flex w-[179px] tracking-[0.45px]"><svg class="w-[26px] h-[27px] mt-[1px] mr-[19px]" viewBox="0 0 496 512" fill="#d6d6d6"><use href="#pin"/></svg><span class="mt-[7px]">PINTEREST</span></a>
      <a class="flex w-[167px] tracking-[0.3px]"><svg class="w-[16px] h-[28px] mr-[18px]" viewBox="20 0 280 512" preserveAspectRatio="none" fill="#d6d6d6"><use href="#fb"/></svg><span class="mt-[7px]">FACEBOOK</span></a>
      <a class="flex w-[165px] tracking-[0.1px]"><svg class="w-[27px] h-[27px] mt-[1px] mr-[19px]" viewBox="0 0 512 512" fill="#d6d6d6"><use href="#tw"/></svg><span class="mt-[7px]">TWITTER</span></a>
      <a class="flex w-[169px] tracking-[0.2px]"><svg class="w-[26px] h-[30px] mr-[19px]" viewBox="0 0 26 30" font-family="Roboto" font-weight="700"><text x="4.500" y="11.500" font-size="14" fill="#d6d6d6" textLength="16" lengthAdjust="spacingAndGlyphs">You</text><rect x="0" y="13" width="26" height="17" rx="4" fill="#d6d6d6"/><text x="2" y="27" font-size="14" font-weight="500" fill="#282828" textLength="22" lengthAdjust="spacingAndGlyphs">Tube</text></svg><span class="mt-[7px]">YOUTUBE</span></a>
      <a class="flex tracking-[0.3px]"><svg class="w-[25px] h-[26px] mt-[2px] mr-[20px]" viewBox="0 0 25 26"><rect width="25" height="26" rx="5" fill="#d6d6d6"/><path d="M10.800 3.500H14V8.500H18V12H14V18Q14 20.500 18.500 19V22.500Q9.500 25 9.500 18.500V12H6.800V9Q10.500 7.800 10.800 3.500Z" fill="#282828"/></svg><span class="mt-[7px]">TUMBLR</span></a>
    </div>
    <p class="flex pl-[541px] mt-[46px] text-white font-bold whitespace-nowrap"><span class="w-[413px] tracking-[0.12px]">Copyright ©2019 All rights reserved | This template is made with</span><svg class="w-[15px] h-[13px] mt-[5px] mr-[4px]" viewBox="0 0 15 13" fill="none" stroke="#fff" stroke-width="1.300"><path d="M7.500 12L2 6.600C-.8 3.500 3.800-1.500 7.500 2.800C11.200-1.500 15.800 3.500 13 6.600Z"/></svg><span class="tracking-[0.2px]">by Colorlib</span></p>
  </div>
</footer>
</body>
</html>
